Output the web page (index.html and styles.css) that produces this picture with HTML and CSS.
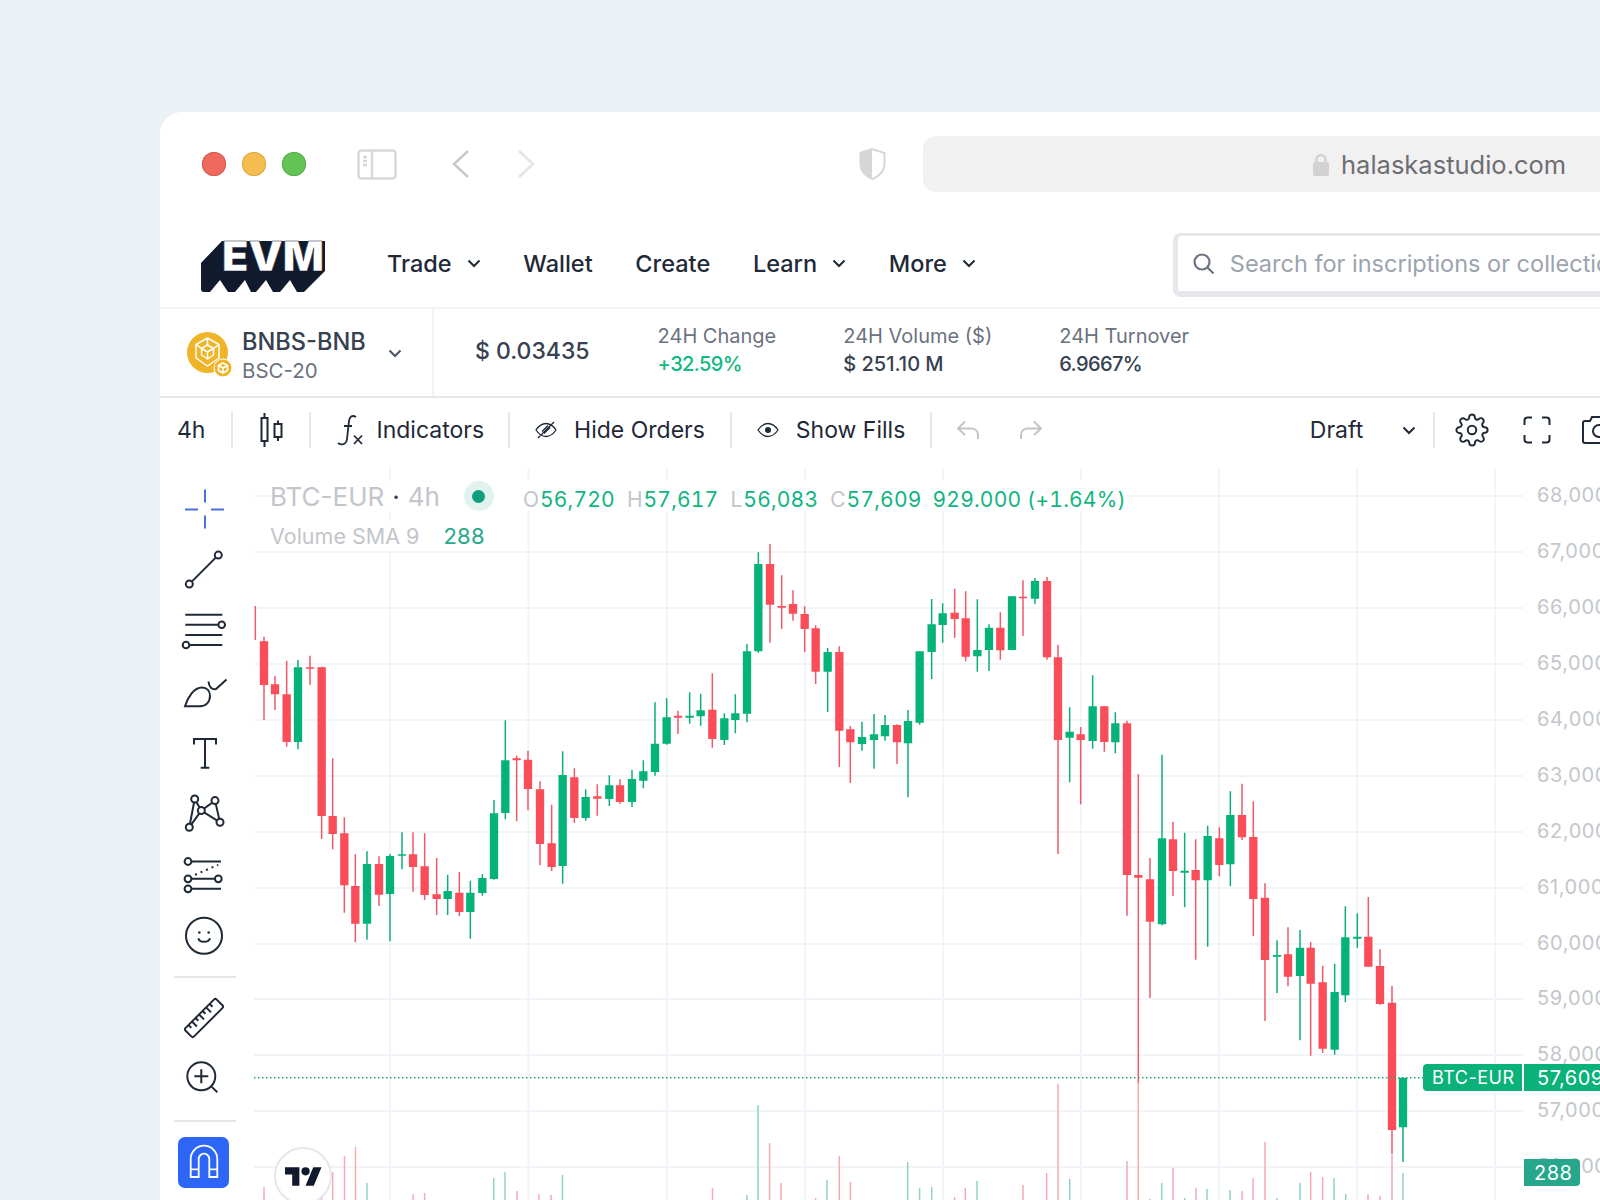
FILE: index.html
```html
<!DOCTYPE html>
<html lang="en">
<head>
<meta charset="utf-8">
<title>EVM chart</title>
<link rel="stylesheet" href="styles.css">
</head>
<body>
<div class="window">
  <header class="chrome">
    <div class="lights"><span class="light red"></span><span class="light amber"></span><span class="light green"></span></div>
    <svg class="side-ico" width="40" height="31" viewBox="0 0 40 31"><rect x="1.5" y="1.5" width="37" height="28" rx="3"/><path d="M15 1.5V29.5M6 8h4M6 12h4M6 16h4"/></svg>
    <svg class="chev-back" width="18" height="30" viewBox="0 0 18 30"><path d="M16 2 2 15l14 13"/></svg>
    <svg class="chev-fwd" width="18" height="30" viewBox="0 0 18 30"><path d="M2 2l14 13L2 28"/></svg>
    <svg class="shield" width="28" height="34" viewBox="0 0 28 34"><path class="shield-fill" d="M14 1 1.5 5v12c0 8 6 13 12.500 16Z"/><path class="shield-line" d="M14 2 26.500 6v11c0 7.500-6 12.500-12.500 15.500"/></svg>
    <div class="urlbar">
      <svg width="18" height="23" viewBox="0 0 18 23"><path class="lock-arc" d="M4.500 10V6.500a4.500 4.500 0 0 1 9 0V10"/><rect class="lock-body" x="1" y="9" width="16" height="14" rx="2"/></svg>
      <span>halaskastudio.com</span>
    </div>
  </header>

  <nav class="nav">
    <div class="logo">
      <svg width="124" height="52" viewBox="0 0 124 52">
        <path class="logo-shadow" d="M0 23 21 1H124V31L103 52H96L89 40 79 52H72L65 40 55 52H50L44 40 34 52H27L19 40 9 52H3Q0 52 0 49Z"/>
        <text class="logo-text" x="21" y="30.500" textLength="102" lengthAdjust="spacingAndGlyphs">EVM</text>
      </svg>
    </div>
    <div class="nav-links">
      <a class="nav-item">Trade <svg class="ch" width="14" height="9" viewBox="0 0 14 9"><path d="M1.500 1.500 7 7l5.500-5.500"/></svg></a>
      <a class="nav-item">Wallet</a>
      <a class="nav-item">Create</a>
      <a class="nav-item">Learn <svg class="ch" width="14" height="9" viewBox="0 0 14 9"><path d="M1.500 1.500 7 7l5.500-5.500"/></svg></a>
      <a class="nav-item">More <svg class="ch" width="14" height="9" viewBox="0 0 14 9"><path d="M1.500 1.500 7 7l5.500-5.500"/></svg></a>
    </div>
    <div class="search">
      <svg width="24" height="24" viewBox="0 0 24 24"><circle cx="10" cy="10" r="7.500"/><path d="m15.500 15.500 6 6"/></svg>
      <span>Search for inscriptions or collections</span>
    </div>
  </nav>

  <section class="stats">
    <div class="pair">
      <svg class="coin" width="46" height="46" viewBox="0 0 46 46">
        <circle class="coin-bg" cx="20.500" cy="20.500" r="20.500"/>
        <path class="coin-cube" d="M20.500 6 32 12.500V26L20.500 34 9 26V12.500ZM20.500 13 26.500 16.500V23L20.500 27 14.500 23V16.500ZM14.500 16.500 20.500 20 26.500 16.500M20.500 20V27M20.500 6V13M9 12.500 14.500 16.500M32 12.500 26.500 16.500"/>
        <circle class="coin-bg coin-rim" cx="36" cy="36" r="9"/>
        <path class="coin-cube" d="M36 31 40.500 33.500V38.500L36 41 31.500 38.500V33.500ZM31.500 33.500 36 36 40.500 33.500M36 36V41"/>
      </svg>
      <div class="pair-names"><div class="pair-name">BNBS-BNB</div><div class="pair-sub">BSC-20</div></div>
      <svg class="pair-ch" width="14" height="9" viewBox="0 0 14 9"><path d="M1.500 1.500 7 7l5.500-5.500"/></svg>
    </div>
    <div class="price">$ 0.03435</div>
    <div class="stat"><div class="stat-label">24H Change</div><div class="stat-val up tight">+32.59%</div></div>
    <div class="stat"><div class="stat-label">24H Volume ($)</div><div class="stat-val">$ 251.10 M</div></div>
    <div class="stat"><div class="stat-label">24H Turnover</div><div class="stat-val tight">6.9667%</div></div>
  </section>

  <div class="toolbar">
    <div class="tb-cell first">4h</div>
    <div class="tb-cell tb-candle">
      <svg class="ic" width="28" height="36" viewBox="0 0 28 36"><path d="M7.500 1V6M7.500 29V35M4.500 6H10.500V29H4.500ZM21 8.500V12M21 25V29M17.500 12H24.500V25H17.500Z"/></svg>
    </div>
    <div class="tb-cell tb-fx">
      <svg class="ic fx" width="26" height="32" viewBox="0 0 26 32"><path d="M19 3C15 .5 12.500 3 12 7L10 25C9.500 30 5 32 1 29M7 12H15M17 21.500 25 30M25 21.500 17 30"/></svg>
      <span class="tb-text">Indicators</span>
    </div>
    <div class="tb-cell">
      <svg class="ic eye" width="22" height="20" viewBox="0 0 22 20"><path d="M1 10C4 5.500 7.500 3.500 11 3.500S18 5.500 21 10C18 14.500 14.500 16.500 11 16.500S4 14.500 1 10ZM7 11.500 13 5.500M9 13.500 15 7.500M3 18 19 2"/></svg>
      <span class="tb-text">Hide Orders</span>
    </div>
    <div class="tb-cell">
      <svg class="ic eye" width="22" height="16" viewBox="0 0 22 16"><path d="M1 8C4 3.500 7.500 1.500 11 1.500S18 3.500 21 8C18 12.500 14.500 14.500 11 14.500S4 12.500 1 8Z"/><circle class="eye-dot" cx="11" cy="8" r="3"/></svg>
      <span class="tb-text">Show Fills</span>
    </div>
    <div class="tb-cell undo-cell">
      <svg class="ic muted" width="24" height="20" viewBox="0 0 24 20"><path d="M9 1.500 2 8.500l7 6.500M2 8.500H15C19.500 8.500 22 11.500 22 15V19"/></svg>
      <svg class="ic muted" width="24" height="20" viewBox="0 0 24 20"><path d="M15 1.500 22 8.500l-7 6.500M22 8.500H9C4.500 8.500 2 11.500 2 15V19"/></svg>
    </div>
    <div class="tb-cell draft-cell">
      <span class="tb-text">Draft</span>
      <svg class="ch" width="14" height="9" viewBox="0 0 14 9"><path d="M1.500 1.500 7 7l5.500-5.500"/></svg>
    </div>
    <div class="tb-tools">
      <svg class="ic gear" width="34" height="34" viewBox="0 0 24 24"><circle cx="12" cy="12" r="3"/><path d="M19.400 15a1.650 1.650 0 0 0 .33 1.820l.06.06a2 2 0 0 1 0 2.830 2 2 0 0 1-2.830 0l-.06-.06a1.650 1.650 0 0 0-1.820-.33 1.650 1.650 0 0 0-1 1.510V21a2 2 0 0 1-2 2 2 2 0 0 1-2-2v-.09A1.650 1.650 0 0 0 9 19.400a1.650 1.650 0 0 0-1.820.33l-.06.06a2 2 0 0 1-2.830 0 2 2 0 0 1 0-2.830l.06-.06a1.650 1.650 0 0 0 .33-1.820 1.650 1.650 0 0 0-1.510-1H3a2 2 0 0 1-2-2 2 2 0 0 1 2-2h.09A1.650 1.650 0 0 0 4.600 9a1.650 1.650 0 0 0-.33-1.820l-.06-.06a2 2 0 0 1 0-2.830 2 2 0 0 1 2.830 0l.06.06a1.650 1.650 0 0 0 1.820.33H9a1.650 1.650 0 0 0 1-1.510V3a2 2 0 0 1 2-2 2 2 0 0 1 2 2v.09a1.650 1.650 0 0 0 1 1.510 1.650 1.650 0 0 0 1.820-.33l.06-.06a2 2 0 0 1 2.830 0 2 2 0 0 1 0 2.830l-.06.06a1.650 1.650 0 0 0-.33 1.820V9a1.650 1.650 0 0 0 1.510 1H21a2 2 0 0 1 2 2 2 2 0 0 1-2 2h-.09a1.650 1.650 0 0 0-1.510 1z"/></svg>
      <svg class="ic" width="28" height="28" viewBox="0 0 28 28"><path d="M9 1.500H4.500Q1.500 1.500 1.500 4.500V9M19 1.500H23.500Q26.500 1.500 26.500 4.500V9M9 26.500H4.500Q1.500 26.500 1.500 23.500V19M19 26.500H23.500Q26.500 26.500 26.500 23.500V19"/></svg>
      <svg class="ic cam" width="34" height="30" viewBox="0 0 34 30"><path d="M3 6H8L10 2H24L26 6H31Q33 6 33 8V26Q33 28 31 28H3Q1 28 1 26V8Q1 6 3 6Z"/><circle cx="17" cy="16" r="6"/></svg>
    </div>
  </div>

  <main class="workspace">
    <aside class="tools">
      <div class="tool"><svg class="tool-ic blue" width="48" height="48" viewBox="0 0 48 48"><path d="M4 23.500H17M30 23.500H43M24 3.600V16.600M24 29.600V42.600"/></svg></div>
      <div class="tool"><svg class="tool-ic" width="48" height="48" viewBox="0 0 48 48"><path d="M34.800 10.600 10.800 34.600"/><circle cx="37.300" cy="8.100" r="3.500"/><circle cx="8.300" cy="37.100" r="3.500"/></svg></div>
      <div class="tool"><svg class="tool-ic" width="48" height="48" viewBox="0 0 48 48"><path d="M4.300 6.700H41.300M4.300 16.700H37.400M4.300 27H41.300M8.300 37H41.300"/><circle cx="40.700" cy="16.700" r="3.300"/><circle cx="5" cy="37" r="3.300"/></svg></div>
      <div class="tool"><svg class="tool-ic" width="48" height="48" viewBox="0 0 48 48"><path d="M4 37.200C7 28 13 18.500 21 18.500 26 18.500 29 22 29 27 29 33 25 37.200 19 37.200ZM27.500 12.500C28 18 31 21 35 20L45.500 10.500"/></svg></div>
      <div class="tool"><svg class="tool-ic" width="48" height="48" viewBox="0 0 48 48"><path d="M13 14.400V9H35V14.400M24 9V37.700M19.700 37.700H28.300"/></svg></div>
      <div class="tool"><svg class="tool-ic" width="48" height="48" viewBox="0 0 48 48"><path d="M8.300 37.300 13.700 9 20.300 20.600 34 10.600 39 32.300 20.300 20.600 8.300 37.300"/><circle cx="13.700" cy="9" r="3.500"/><circle cx="34" cy="10.600" r="3.500"/><circle cx="20.300" cy="20.600" r="3.500"/><circle cx="8.300" cy="37.300" r="3.500"/><circle cx="39" cy="32.300" r="3.500"/></svg></div>
      <div class="tool"><svg class="tool-ic" width="48" height="48" viewBox="0 0 48 48"><path d="M10.500 10.500H40M10.500 27.800H34M10.500 37.800H40"/><path class="dots" d="M14 23.800 37.300 13.800"/><circle cx="7" cy="10.500" r="3.400"/><circle cx="7" cy="27.800" r="3.400"/><circle cx="37.300" cy="27.800" r="3.400"/><circle cx="7" cy="37.800" r="3.400"/></svg></div>
      <div class="tool"><svg class="tool-ic" width="48" height="48" viewBox="0 0 48 48"><circle cx="23" cy="23.700" r="18"/><path d="M17.300 26.200C18.500 31 27.500 31 29 26.200"/><circle class="solid" cx="18.300" cy="20.500" r="1.300"/><circle class="solid" cx="27.700" cy="20.500" r="1.300"/></svg></div>
      <div class="tool-sep"></div>
      <div class="tool short"><svg class="tool-ic" width="48" height="48" viewBox="0 0 48 48"><g transform="rotate(-45 23 24)"><rect x="1" y="18" width="44" height="12" rx="2"/><path d="M7 18V22M12 18V25M17 18V22M22 18V25M27 18V22M32 18V25M37 18V22"/></g></svg></div>
      <div class="tool short"><svg class="tool-ic" width="48" height="48" viewBox="0 0 48 48"><circle cx="20.300" cy="22.300" r="14"/><path d="M13.300 22.300H27.300M20.300 15.300V29.300M30.700 32.900 36.300 38.300"/></svg></div>
      <div class="tool-sep low"></div>
      <div class="magnet"><svg width="52" height="52" viewBox="0 0 52 52"><path d="M12.700 40V22a13.300 13.300 0 0 1 26.600 0V40H31.300V22a5.300 5.300 0 0 0-10.600 0V40ZM12.700 32.300H20.700M31.300 32.300H39.300"/></svg></div>
    </aside>

    <div class="chart">
      <svg class="plot" width="1346" height="732" viewBox="254 468 1346 732">
        <path class="grid" d="M254 496H1523M254 552H1523M254 608H1523M254 664H1523M254 720H1523M254 776H1523M254 832H1523M254 888H1523M254 944H1523M254 999H1523M254 1055H1523M254 1111H1523M254 1167H1523M390 468V1200M528.500 468V1200M667 468V1200M805 468V1200M943 468V1200M1081 468V1200M1219 468V1200M1357 468V1200M1495 468V1200"/>
        <path class="vol-r" d="M264 1187V1200M321.400 1197V1200M332.700 1172V1200M344.500 1156V1200M355.500 1147V1200M413 1194V1200M424.600 1193V1200M517 1191V1200M539 1194V1200M551 1195V1200M712.500 1188V1200M769.600 1143V1200M781 1183V1200M815.600 1198V1200M839.300 1156V1200M850.400 1182V1200M954.700 1197V1200M965.300 1188V1200M1023 1185V1200M1046.700 1173V1200M1058 1084V1200M1127 1161V1200M1138.300 1083V1200M1173 1168V1200M1196 1188V1200M1242 1191V1200M1253 1178V1200M1265 1142V1200M1310.700 1172V1200M1322.700 1177V1200M1368 1194V1200M1380 1196V1200M1392 1155V1200"/>
        <path class="vol-g" d="M367 1183V1200M493.700 1178V1200M505 1172V1200M562.500 1175V1200M747 1195V1200M758 1105V1200M827 1180V1200M907.600 1162V1200M919.600 1188V1200M931.700 1187V1200M977 1181V1200M1069.700 1179V1200M1150 1199V1200M1161.700 1183V1200M1184.700 1198V1200M1207 1189V1200M1230 1190V1200M1277 1198V1200M1300 1183V1200M1334 1178V1200M1345.700 1194V1200M1403 1173V1200"/>
        <g transform="translate(250 540) scale(.33333)">
          <path class="w-r" d="M16 198V300M42 290V540M75 408V510M110 362V620M180 347V435M215 380V897M248 655V928M283 832V1118M316 943V1207M387 949V1098M489 877V1055M524 880V1080M560 954V1125M628 996V1128M800 647V844M834 632V811M870 724V976M905 794V993M973 685V849M1042 733V827M1110 718V791M1284 512V582"/>
          <path class="b-r" d="M42 304V435M75 433V463M110 463V606M180 382V386M215 382V828M248 828V882M283 880V1036M316 1038V1151M387 972V1064M489 943V981M524 979V1065M560 1063V1077M628 1058V1116M800 655V661M834 659V747M870 748V912M905 910V981M973 712V834M1042 769V776M1110 736V786M1284 527V533"/>
          <path class="w-g" d="M144 360V628M351 934V1199M420 942V1204M456 877V988M593 1004V1125M661 1022V1196M697 1003V1067M732 780V1019M766 541V838M938 634V1031M1007 748V842M1078 706V798M1146 690V801M1180 661V745M1215 487V707M1250 475V614M1319 457V551"/>
          <path class="b-g" d="M144 382V606M351 972V1151M420 948V1062M456 943V947M593 1053V1077M661 1058V1116M697 1014V1059M732 820V1017M766 661V819M938 705V978M1007 771V834M1078 736V777M1146 717V786M1180 694V722M1215 611V696M1250 532V611M1319 527V533"/>
        </g>
        <g transform="translate(680 530) scale(.33333)">
          <path class="w-r" d="M97 430V653M270 42V338M305 136V297M339 181V272M374 229V366M407 286V462M478 349V711M511 588V759M651 583V702M824 176V323M857 184V394M961 247V389M1029 151V318M1101 141V389M1134 344V972M1202 591V823M1273 529V665"/>
          <path class="b-r" d="M97 539V627M270 102V224M305 228V233M339 222V251M374 252V297M407 295V425M478 366V602M511 598V637M651 585V637M824 248V267M857 265V380M961 293V361M1029 200V205M1101 153V382M1134 382V630M1202 613V630M1273 529V636"/>
          <path class="w-g" d="M62 491V587M133 550V645M166 493V610M201 342V577M235 67V368M443 354V546M546 575V662M582 552V716M615 555V632M684 540V802M719 364V584M755 207V447M788 220V338M892 208V425M927 283V423M996 199V361M1065 144V222M1169 532V757M1238 436V656M1306 547V670"/>
          <path class="b-g" d="M62 541V559M133 565V630M166 550V570M201 364V551M235 102V364M443 366V425M546 621V642M582 613V630M615 585V619M684 573V640M719 364V578M755 283V366M788 250V285M892 360V379M927 293V360M996 199V360M1065 153V206M1169 605V623M1238 529V633M1306 580V637"/>
        </g>
        <g transform="translate(1050 680) scale(.33333)">
          <path class="w-r" d="M231 122V707M265 283V1210M300 534V954M369 425V648M437 478V839M508 442V589M576 311V480M610 364V769M645 610V1023M714 742V919M782 786V1127M818 857V1119M955 651V860M990 808V974M1026 918V1423"/>
          <path class="b-r" d="M231 130V585M265 585V593M300 598V725M369 478V573M437 570V601M508 475V555M576 405V472M610 471V657M645 653V840M714 823V890M782 803V911M818 907V1106M955 770V860M990 858V972M1026 968V1350"/>
          <path class="w-g" d="M336 224V736M404 458V682M473 437V800M541 334V619M681 781V939M750 750V1081M854 851V1124M886 679V967M922 700V804M1059 1193V1446"/>
          <path class="b-g" d="M336 475V733M404 572V578M473 468V601M541 405V553M681 825V830M750 803V888M854 936V1109M886 772V946M922 770V776M1059 1193V1342"/>
        </g>
        <path class="last" d="M254 1077.800H1424"/>
        <g class="axis">
          <text x="1537" y="502">68,000</text><text x="1537" y="558">67,000</text><text x="1537" y="614">66,000</text><text x="1537" y="670">65,000</text><text x="1537" y="726">64,000</text><text x="1537" y="782">63,000</text><text x="1537" y="838">62,000</text><text x="1537" y="894">61,000</text><text x="1537" y="950">60,000</text><text x="1537" y="1005">59,000</text><text x="1537" y="1061">58,000</text><text x="1537" y="1117">57,000</text><text x="1537" y="1173">56,000</text>
        </g>
      </svg>

      <div class="legend">
        <div class="legend-row">
          <span class="l-sym">BTC-EUR</span><span class="l-mid">·</span><span class="l-sym">4h</span>
          <span class="live"><span class="live-dot"></span></span>
          <span class="l-ohlc o">O</span><span class="l-num">56,720</span>
          <span class="l-ohlc">H</span><span class="l-num">57,617</span>
          <span class="l-ohlc">L</span><span class="l-num">56,083</span>
          <span class="l-ohlc">C</span><span class="l-num">57,609</span>
          <span class="l-num l-chg">929.000 (+1.64%)</span>
        </div>
        <div class="legend-row second">
          <span class="l-vol">Volume SMA 9</span><span class="l-volv">288</span>
        </div>
      </div>

      <div class="tag tag-name">BTC-EUR</div>
      <div class="tag tag-price">57,609</div>
      <div class="tag tag-vol">288</div>
      <div class="tv">
        <svg width="37" height="19" viewBox="0 4 36 18"><path d="M14 22H7V11H0V4h14v18zM28 22h-8l7.500-18h8L28 22z"/><circle cx="20" cy="8" r="4"/></svg>
      </div>
    </div>
  </main>
</div>
</body>
</html>
```

FILE: styles.css
```css
* { box-sizing: border-box; }
html, body { margin: 0; height: 1200px; overflow: hidden; }
body {
  background: #eaf2f5;
  padding: 112px 0 0 160px;
  font-family: Inter, "Liberation Sans", sans-serif;
  color: #1f2937;
}
svg { display: block; flex: none; fill: none; }

.window {
  width: 1440px;
  height: 1088px;
  background: #fff;
  border-top-left-radius: 22px;
  overflow: hidden;
}

/* browser chrome */
.chrome { height: 104px; display: flex; align-items: center; padding-left: 42px; }
.lights { display: flex; gap: 16px; }
.light { width: 24px; height: 24px; border-radius: 50%; }
.red { background: #ee6a5f; box-shadow: inset 0 0 0 1px #d9584e; }
.amber { background: #f5bd4f; box-shadow: inset 0 0 0 1px #dfa53f; }
.green { background: #61c454; box-shadow: inset 0 0 0 1px #55ad49; }
.side-ico { margin-left: 51px; stroke: #d8d8d8; stroke-width: 2.500; }
.chev-back { margin-left: 55px; stroke: #c8c8c8; stroke-width: 2.500; }
.chev-fwd { margin-left: 47px; stroke: #e4e4e4; stroke-width: 2.500; }
.shield { margin-left: 323px; }
.shield-fill { fill: #d6d6d6; }
.shield-line { stroke: #d6d6d6; stroke-width: 2; }
.urlbar {
  margin-left: 37px;
  width: 800px;
  height: 56px;
  flex: none;
  background: #f1f1f2;
  border-radius: 13px;
  display: flex;
  align-items: center;
  padding: 1px 0 0 389px;
  gap: 11px;
  color: #6e6e72;
  font-size: 25.500px;
  white-space: nowrap;
}
.lock-arc { stroke: #d2d2d2; stroke-width: 2.500; }
.lock-body { fill: #d2d2d2; }

/* nav */
.nav { height: 93px; display: flex; align-items: center; padding: 5px 0 0 41px; border-bottom: 2px solid #f2f3f5; }
.logo { margin-top: 4px; }
.logo svg { overflow: visible; }
.logo-shadow { fill: #111a2c; }
.logo-text { font-family: Inter, sans-serif; font-weight: 900; font-size: 41px; fill: #fff; stroke: #111a2c; stroke-width: .4px; }
.nav-links { margin: -2px 0 0 62px; display: flex; gap: 42.700px; }
.nav-item { display: flex; align-items: center; gap: 15px; font-size: 23.500px; font-weight: 500; color: #1f2937; }
.ch { stroke: #1f2937; stroke-width: 2; }
.search {
  margin: 2px 0 0 197px;
  width: 500px;
  height: 64px;
  flex: none;
  background: #fff;
  border: solid #e5e7eb;
  border-width: 3px 0 6px 5px;
  border-radius: 8px;
  display: flex;
  align-items: center;
  padding-left: 14px;
  gap: 14px;
  color: #9ca3af;
  font-size: 23.500px;
  white-space: nowrap;
}
.search svg { stroke: #6b7280; stroke-width: 2.200; }

/* stats */
.stats { height: 89px; display: flex; align-items: center; border-bottom: 2px solid #e5e7eb; }
.pair { width: 274px; height: 87px; display: flex; align-items: center; padding-left: 27px; border-right: 2px solid #f2f3f5; flex: none; }
.coin { margin-top: 5px; }
.coin-bg { fill: #f0b429; }
.coin-rim { stroke: #fff; stroke-width: 1; }
.coin-cube { stroke: #fff; stroke-width: 1.500; stroke-linejoin: round; }
.pair-names { margin: 6px 0 0 9px; }
.pair-name { font-size: 23.600px; font-weight: 500; color: #374151; line-height: 30px; }
.pair-sub { font-size: 20.500px; color: #6b7280; line-height: 28px; }
.pair-ch { margin: 2px 0 0 22px; stroke: #4b5563; stroke-width: 2; }
.price { margin: -4px 68px 0 41px; font-size: 23px; font-weight: 500; color: #374151; }
.stat { margin: -6px 67px 0 0; }
.stat-label { font-size: 20px; color: #6b7280; line-height: 28px; }
.stat-val { font-size: 20px; font-weight: 500; color: #374151; line-height: 28px; }
.stat-val.tight { letter-spacing: -.6px; }
.stat-val.up { color: #10b981; }

/* toolbar */
.toolbar { height: 70px; display: flex; align-items: center; padding-bottom: 6px; font-size: 23px; }
.tb-cell { height: 36px; display: flex; align-items: center; gap: 17px; padding: 0 25px; border-right: 2px solid #e5e7eb; flex: none; }
.tb-cell.first { padding: 0 26px 0 17px; }
.tb-cell.tb-candle { padding: 0 24px; }
.tb-cell.tb-fx { gap: 13px; padding: 0 24px 0 26px; }
.tb-text { white-space: nowrap; }
.ic { stroke: #1f2937; stroke-width: 2; }
.fx { stroke-width: 1.800; }
.eye { stroke-width: 1.300; }
.eye-dot { fill: #1f2937; stroke: none; }
.muted { stroke: #c4c5c9; }
.gear { stroke-width: 1.400; }
.tb-cell.undo-cell { gap: 39px; padding: 0 26px 0 24px; border-right: 0; }
.tb-cell.draft-cell { margin-left: 240.500px; gap: 39px; padding: 0 17px 0 0; }
.tb-tools { display: flex; align-items: center; gap: 34px; padding-left: 20px; flex: none; }
.cam { margin-left: -3px; }

/* workspace */
.workspace { display: flex; height: 732px; }
.tools { width: 90px; margin-right: 4px; padding-top: 12px; display: flex; flex-direction: column; align-items: center; flex: none; }
.tool { height: 60.800px; display: flex; align-items: center; justify-content: center; flex: none; }
.tool.short { height: 60px; }
.tool-ic { stroke: #1f2937; stroke-width: 2; }
.tool-ic circle { fill: #fff; }
.tool-ic circle.solid { fill: #1f2937; stroke: none; }
.blue { stroke: #4a72dd; }
.dots { stroke-dasharray: 2 4; }
.tool-sep { width: 62px; height: 2px; background: #e5e7eb; margin: 10px 0; flex: none; }
.tool-sep.low { margin: 12px 0 15px; }
.magnet { width: 51px; height: 51px; margin-left: -3px; border-radius: 7px; background: #2d66f6; flex: none; }
.magnet svg { stroke: #fff; stroke-width: 1.800; }

/* chart */
.chart { position: relative; width: 1346px; height: 732px; flex: none; }
.grid { stroke: #f1f4f9; stroke-width: 2; }
.vol-r { stroke: #f5abb1; stroke-width: 1.500; }
.vol-g { stroke: #92d2c1; stroke-width: 1.500; }
.w-r { stroke: #ef5a67; stroke-width: 4.500; }
.b-r { stroke: #f94d5a; stroke-width: 25; }
.w-g { stroke: #0eae7c; stroke-width: 4.500; }
.b-g { stroke: #05b27a; stroke-width: 25; }
.last { stroke: #26a17f; stroke-width: 1.500; stroke-dasharray: 1.500 2.500; }
.axis text { font-family: Inter, sans-serif; font-size: 20px; letter-spacing: .6px; fill: #c4c6cb; }

.legend { position: absolute; left: 16px; top: 13px; display: flex; flex-direction: column; align-items: flex-start; gap: 10px; }
.legend-row { display: flex; align-items: center; height: 30px; background: #fff; white-space: nowrap; }
.l-sym { font-size: 26px; color: #c3c5ca; }
.l-mid { font-size: 26px; color: #374151; margin: 0 8px; }
.live { width: 30px; height: 30px; border-radius: 50%; background: #e2f3ef; display: flex; align-items: center; justify-content: center; margin: 0 18px 0 24px; }
.live-dot { width: 13px; height: 13px; border-radius: 50%; background: #0f9d7f; }
.l-ohlc { font-size: 21px; color: #c3c5ca; margin: 6px 0 0 12px; }
.l-ohlc.o { margin-left: 11px; }
.l-num { font-size: 21px; color: #10b581; margin: 6px 0 0 1px; letter-spacing: .2px; font-variant-numeric: tabular-nums; }
.l-chg { margin-left: 11px; }
.l-vol { font-size: 21.500px; color: #c3c5ca; }
.l-volv { font-size: 22px; color: #2aa88c; margin-left: 24px; letter-spacing: .3px; }

.tag { position: absolute; height: 27px; display: flex; align-items: center; color: #fff; font-size: 20px; letter-spacing: .5px; }
.tag-name { left: 1169px; top: 596px; width: 99px; background: #0ab27a; border-radius: 4px 0 0 4px; padding-left: 9px; font-size: 18px; }
.tag-price { left: 1270px; top: 596px; width: 76px; background: #0ab27a; padding-left: 13px; }
.tag-vol { left: 1270px; top: 691px; width: 56px; background: #26a68a; border-radius: 0 4px 4px 0; padding-left: 10px; }
.tv { position: absolute; left: 20px; top: 679px; width: 58px; height: 58px; border-radius: 50%; background: #fff; border: 2px solid #e5e7eb; display: flex; align-items: center; justify-content: center; }
.tv svg { fill: #111a2c; }
```
